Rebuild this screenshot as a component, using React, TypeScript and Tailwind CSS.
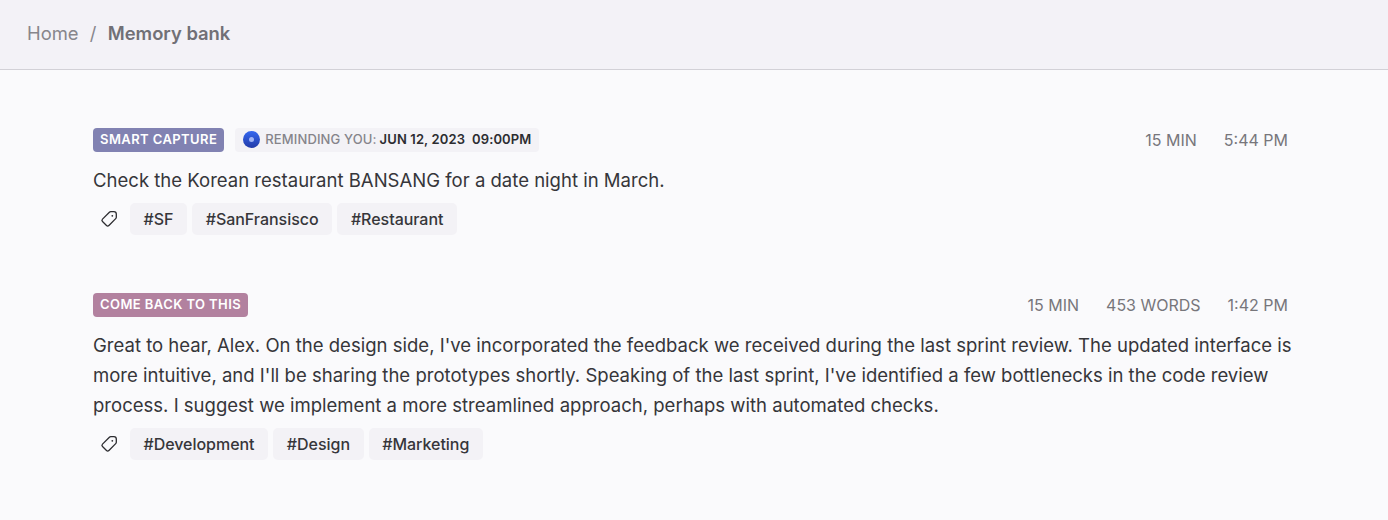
import clsx from "clsx";

type Entry = {
  label: string;
  color: string;
  reminder?: { date: string; time: string };
  meta: string[];
  lines: string[];
  tags: string[];
};

const entries: Entry[] = [
  {
    label: "Smart capture",
    color: "bg-[#8182b2]",
    reminder: { date: "Jun 12, 2023", time: "09:00PM" },
    meta: ["15 MIN", "5:44 PM"],
    lines: ["Check the Korean restaurant BANSANG for a date night in March."],
    tags: ["#SF", "#SanFransisco", "#Restaurant"],
  },
  {
    label: "Come back to this",
    color: "bg-[#b2819f]",
    meta: ["15 MIN", "453 WORDS", "1:42 PM"],
    lines: [
      "Great to hear, Alex. On the design side, I've incorporated the feedback we received during the last sprint review. The updated interface is",
      "more intuitive, and I'll be sharing the prototypes shortly. Speaking of the last sprint, I've identified a few bottlenecks in the code review",
      "process. I suggest we implement a more streamlined approach, perhaps with automated checks.",
    ],
    tags: ["#Development", "#Design", "#Marketing"],
  },
];

function TagIcon() {
  return (
    <svg viewBox="0 0 18 18" className="h-[18px] w-[18px]" fill="none" stroke="#2c2c30" strokeWidth="1.3" strokeLinejoin="round">
      <path d="M9.4 2.3a2 2 0 0 1 1.4-.6h3.1a2.4 2.4 0 0 1 2.4 2.4v3.1a2 2 0 0 1-.6 1.4l-6.8 6.9a1.7 1.7 0 0 1-2.4 0l-4-4a1.7 1.7 0 0 1 0-2.4Z" />
      <circle cx="12.3" cy="5.8" r=".9" fill="#2c2c30" stroke="none" />
    </svg>
  );
}

function MemoryEntry({ entry }: { entry: Entry }) {
  return (
    <article>
      <div className="flex h-6 items-center justify-between">
        <div className="flex items-center gap-[11px]">
          <span className={clsx("flex h-6 items-center rounded px-[7px] text-[13px] font-semibold uppercase tracking-[0.42px] text-white", entry.color)}>
            {entry.label}
          </span>
          {entry.reminder && (
            <span className="flex h-6 items-center rounded bg-[#f3f2f6] px-2 pb-px text-[13px] font-medium uppercase text-[#85848a]">
              <span className="mr-[5px] grid h-[17px] w-[17px] place-items-center rounded-full bg-linear-to-b from-[#3468f0] to-[#233ba8]">
                <span className="h-[5px] w-[5px] rounded-full bg-[#a0b4f5]" />
              </span>
              <span className="tracking-[0.12px]">Reminding you:</span>
              <span className="ml-[3px] font-semibold tracking-[0.12px] text-[#2c2c30]">{entry.reminder.date}</span>
              <span className="ml-[7px] font-semibold tracking-[0.12px] text-[#2c2c30]">{entry.reminder.time}</span>
            </span>
          )}
        </div>
        <div className="flex gap-[27px] pr-[7px] text-base text-[#77767b]">
          {entry.meta.map((m) => (
            <span key={m}>{m}</span>
          ))}
        </div>
      </div>

      <p className="mt-[13px] text-[18.54px] leading-[30px] whitespace-nowrap text-[#36363a]">
        {entry.lines.map((line) => (
          <span key={line} className="block">{line}</span>
        ))}
      </p>

      <div className="mt-2 flex h-8 items-center gap-[5.3px]">
        <span className="mr-[6.7px] ml-[7px]">
          <TagIcon />
        </span>
        {entry.tags.map((tag) => (
          <span key={tag} className="flex h-8 items-center rounded-[5px] bg-[#f3f2f6] px-[13.5px] text-base font-medium tracking-[-0.03px] text-[#36363a]">
            {tag}
          </span>
        ))}
      </div>
    </article>
  );
}

export default function App() {
  return (
    <div className="h-[520px] overflow-hidden bg-[#fafafc] font-['Inter',sans-serif]">
      <header className="flex h-[70px] items-center border-b border-[#d2d1d7] bg-[#f3f2f7] px-[27px] pb-px text-[18.4px] text-[#87868c]">
        <span>Home</span>
        <span className="mx-[11.3px]">/</span>
        <span className="font-semibold text-[#717076]">Memory bank</span>
      </header>
      <main className="flex flex-col gap-[58px] pt-[58px] pr-[93px] pl-[93px]">
        {entries.map((entry) => (
          <MemoryEntry key={entry.label} entry={entry} />
        ))}
      </main>
    </div>
  );
}
